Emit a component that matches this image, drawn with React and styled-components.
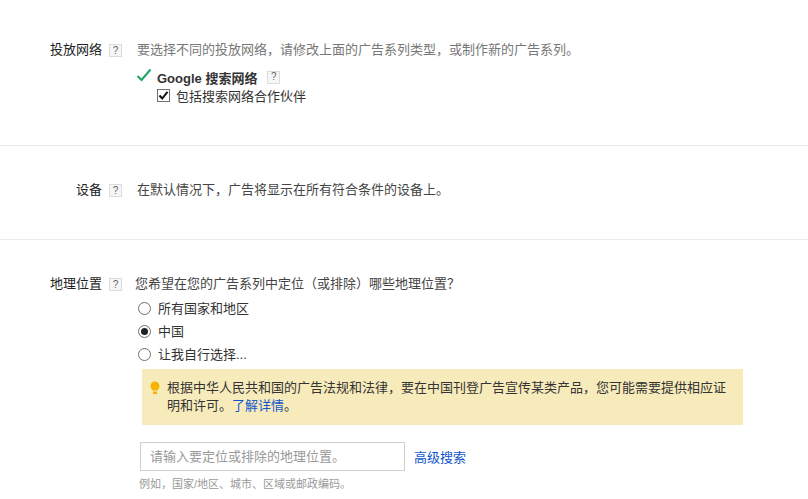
import React from "react";
import styled, { createGlobalStyle } from "styled-components";

const Global = createGlobalStyle`
  html, body { margin: 0; padding: 0; background: #fff; overflow: hidden; }
  body { font-family: Arial, "Liberation Sans", "Noto Sans CJK SC", sans-serif; font-size: 13px; color: #333; }
`;

const Page = styled.div`
  width: 808px;
  height: 499px;
  overflow: hidden;
`;

const Section = styled.section`
  display: grid;
  grid-template-columns: 102px 1fr;
  height: ${(p) => p.$height}px;
  padding-top: ${(p) => p.$top}px;
  box-sizing: border-box;
  border-bottom: ${(p) => (p.$last ? "none" : "1px solid #ebebeb")};
`;

const Label = styled.div`
  text-align: right;
  line-height: 18px;
  color: #222;
  white-space: nowrap;
`;

const Help = styled.span`
  display: inline-flex;
  align-items: center;
  justify-content: center;
  box-sizing: border-box;
  width: 13px;
  height: 13px;
  border: 1px solid #dcdcdc;
  background: #f6f6f6;
  color: #666;
  font-size: 10px;
  line-height: 1;
  flex: none;
`;

const LabelHelp = styled(Help)`
  margin: 3px 0 0 7px;
`;

const Body = styled.div`
  display: flex;
  flex-direction: column;
`;

const HeadRow = styled.div`
  display: flex;
  align-items: flex-start;
`;

const Note = styled.div`
  line-height: 18px;
  margin-left: ${(p) => p.$left}px;
  color: ${(p) => p.$color || "#777"};
  white-space: nowrap;
`;

const NetworkRow = styled.div`
  display: flex;
  align-items: center;
  margin: 9px 0 0 34px;
  height: 18px;
`;

const Tick = styled.svg`
  width: 16px;
  height: 14px;
  margin-right: 5px;
  margin-top: -5px;
`;

const NetworkName = styled.strong`
  color: #333;
  font-weight: 700;
  margin-right: 10px;
`;

const PartnerRow = styled.div`
  display: flex;
  align-items: center;
  margin: 0 0 0 55px;
  height: 18px;
  color: #333;
`;

const CheckBox = styled.span`
  display: inline-flex;
  align-items: center;
  justify-content: center;
  box-sizing: border-box;
  width: 13px;
  height: 13px;
  border: 1px solid #707070;
  background: #fff;
  margin-right: 6px;
`;

const RadioList = styled.div`
  display: flex;
  flex-direction: column;
  gap: 5px;
  margin: 5px 0 0 36px;
`;

const RadioRow = styled.div`
  display: flex;
  align-items: center;
  height: 18px;
  color: #333;
`;

const Radio = styled.span`
  position: relative;
  box-sizing: border-box;
  width: 13px;
  height: 13px;
  border-radius: 50%;
  border: 1px solid #707070;
  background: #fff;
  margin: 2px 7px 0 0;
  &::after {
    content: "";
    display: ${(p) => (p.$on ? "block" : "none")};
    position: absolute;
    left: 2px;
    top: 2px;
    width: 7px;
    height: 7px;
    border-radius: 50%;
    background: #222;
  }
`;

const Notice = styled.div`
  display: flex;
  width: 601px;
  height: 56px;
  box-sizing: border-box;
  margin: 7px 0 0 40px;
  padding: 10px 14px 0 8px;
  background: #f8ebbb;
  color: #333;
  line-height: 18px;
`;

const Bulb = styled.svg`
  flex: none;
  width: 10px;
  height: 14px;
  margin: 2px 7px 0 0;
`;

const NoticeLine = styled.div`
  display: flex;
  white-space: nowrap;
`;

const Link = styled.a`
  color: #1155cc;
  text-decoration: none;
  cursor: pointer;
`;

const SearchRow = styled.div`
  display: flex;
  align-items: center;
  margin: 17px 0 0 38px;
`;

const SearchInput = styled.input`
  box-sizing: border-box;
  width: 265px;
  height: 29px;
  padding: 0 9px;
  border: 1px solid #d0d0d0;
  outline: none;
  font: inherit;
  margin-right: 9px;
  &::placeholder { color: #999; opacity: 1; }
`;

const Example = styled.div`
  margin: 5px 0 0 37px;
  font-size: 11px;
  line-height: 16px;
  color: #999;
  white-space: nowrap;
`;

export default function App() {
  return (
    <Page>
      <Global />
      <Section $height={146} $top={41}>
        <Label>投放网络</Label>
        <Body>
          <HeadRow>
            <LabelHelp>?</LabelHelp>
            <Note $left={15}>要选择不同的投放网络，请修改上面的广告系列类型，或制作新的广告系列。</Note>
          </HeadRow>
          <NetworkRow>
            <Tick viewBox="0 0 16 14">
              <path d="M1.5 8 L5.5 12 L14.5 1.5" fill="none" stroke="#1fa463" strokeWidth="2" />
            </Tick>
            <NetworkName>Google 搜索网络</NetworkName>
            <Help>?</Help>
          </NetworkRow>
          <PartnerRow>
            <CheckBox>
              <svg width="11" height="11" viewBox="0 0 11 11">
                <path d="M1.5 5.5 L4.2 8.5 L9.5 1.8" fill="none" stroke="#111" strokeWidth="2" />
              </svg>
            </CheckBox>
            包括搜索网络合作伙伴
          </PartnerRow>
        </Body>
      </Section>
      <Section $height={94} $top={35}>
        <Label>设备</Label>
        <HeadRow>
          <LabelHelp>?</LabelHelp>
          <Note $left={15} $color="#444">在默认情况下，广告将显示在所有符合条件的设备上。</Note>
        </HeadRow>
      </Section>
      <Section $height={259} $top={35} $last>
        <Label>地理位置</Label>
        <Body>
          <HeadRow>
            <LabelHelp>?</LabelHelp>
            <Note $left={13} $color="#444">您希望在您的广告系列中定位（或排除）哪些地理位置？</Note>
          </HeadRow>
          <RadioList>
            <RadioRow><Radio />所有国家和地区</RadioRow>
            <RadioRow><Radio $on />中国</RadioRow>
            <RadioRow><Radio />让我自行选择...</RadioRow>
          </RadioList>
          <Notice>
            <Bulb viewBox="0 0 10 14">
              <path d="M5 0.5 A4.5 4.5 0 0 1 9.5 5 C9.5 7 8 8 7.5 9.5 L2.5 9.5 C2 8 0.5 7 0.5 5 A4.5 4.5 0 0 1 5 0.5 Z" fill="#f4b400" />
              <rect x="3" y="10.5" width="4" height="2.5" fill="#f4b400" />
            </Bulb>
            <div>
              <NoticeLine>根据中华人民共和国的广告法规和法律，要在中国刊登广告宣传某类产品，您可能需要提供相应证</NoticeLine>
              <NoticeLine>
                <span>明和许可。</span>
                <Link>了解详情</Link>
                <span>。</span>
              </NoticeLine>
            </div>
          </Notice>
          <SearchRow>
            <SearchInput placeholder="请输入要定位或排除的地理位置。" />
            <Link>高级搜索</Link>
          </SearchRow>
          <Example>例如，国家/地区、城市、区域或邮政编码。</Example>
        </Body>
      </Section>
    </Page>
  );
}
